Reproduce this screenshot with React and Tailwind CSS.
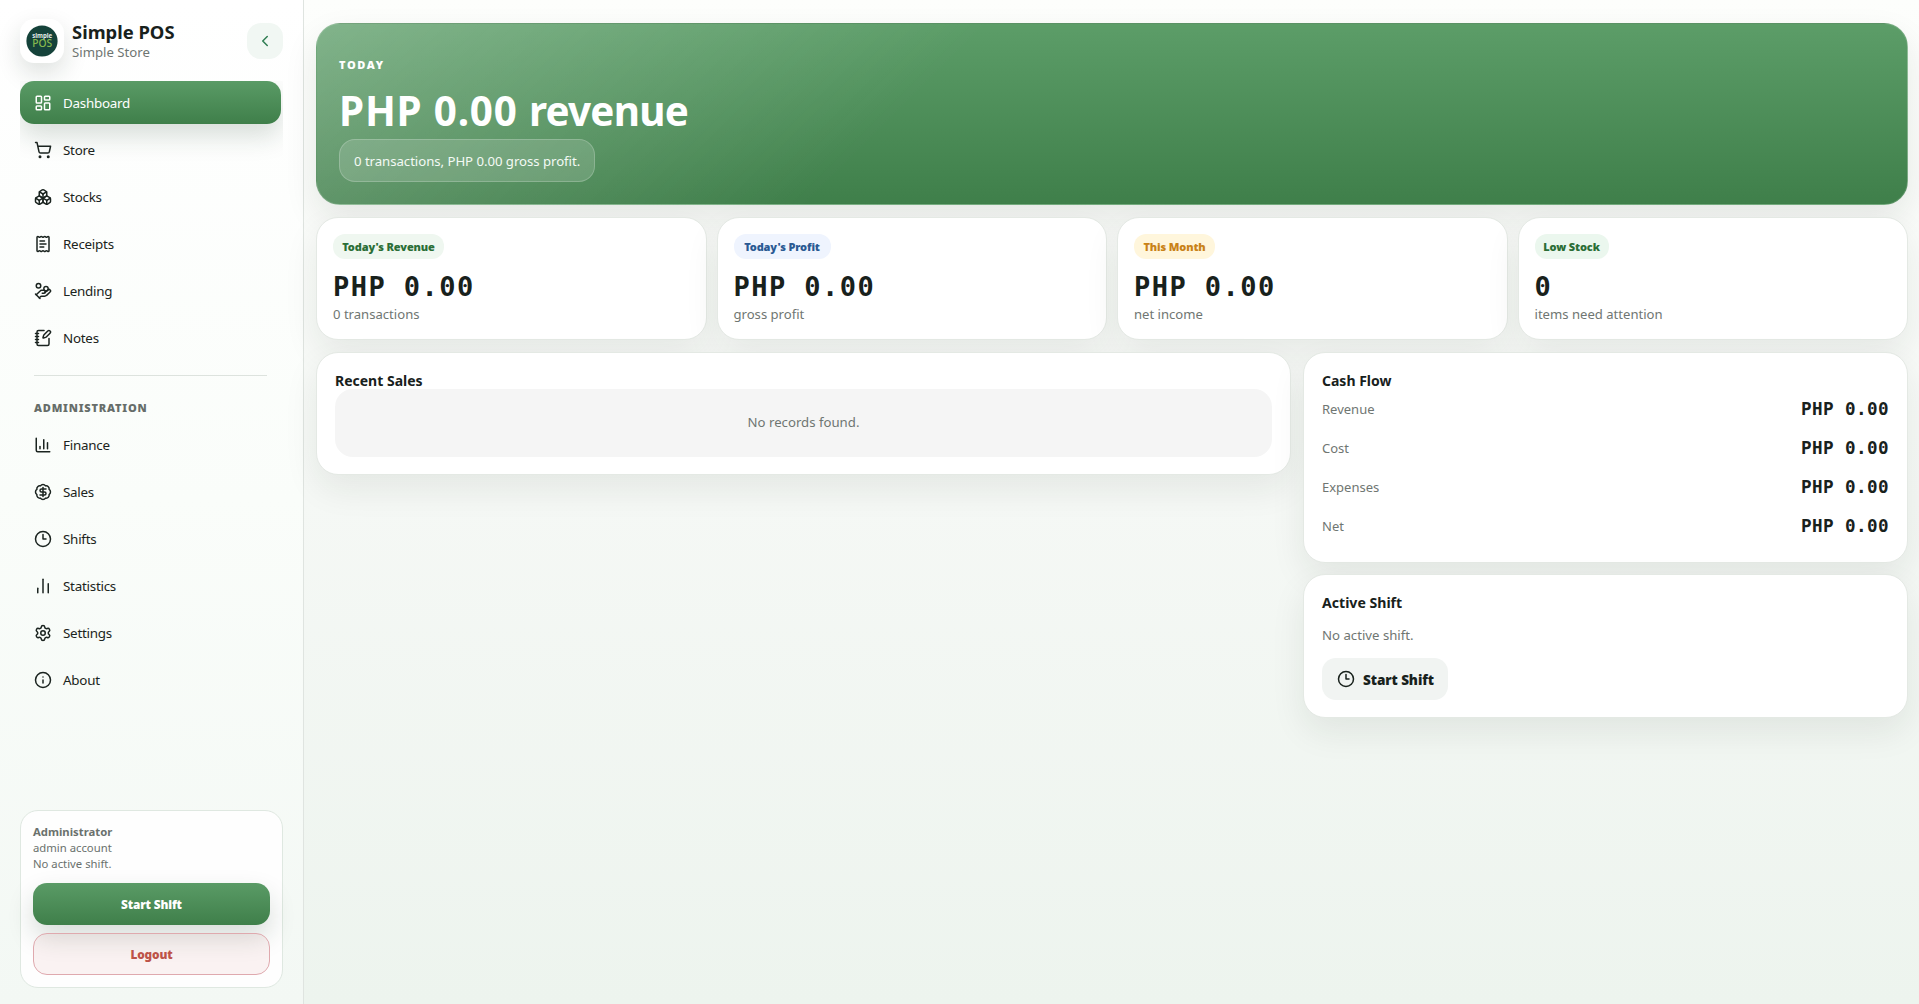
import React from "react";
import {
  LayoutDashboard,
  ShoppingCart,
  Boxes,
  ReceiptText,
  HandCoins,
  NotebookPen,
  ChartColumn,
  BadgeDollarSign,
  Clock3,
  ChartNoAxesColumn,
  Settings,
  Info,
  ChevronLeft,
} from "lucide-react";

const mainNav = [
  { label: "Dashboard", icon: LayoutDashboard, active: true },
  { label: "Store", icon: ShoppingCart },
  { label: "Stocks", icon: Boxes },
  { label: "Receipts", icon: ReceiptText },
  { label: "Lending", icon: HandCoins },
  { label: "Notes", icon: NotebookPen },
];

const adminNav = [
  { label: "Finance", icon: ChartColumn },
  { label: "Sales", icon: BadgeDollarSign },
  { label: "Shifts", icon: Clock3 },
  { label: "Statistics", icon: ChartNoAxesColumn },
  { label: "Settings", icon: Settings },
  { label: "About", icon: Info },
];

const stats = [
  { label: "Today's Revenue", value: "PHP 0.00", note: "0 transactions", tone: "bg-[#eff7f0] text-[#2b6e37]", width: "w-[111px]" },
  { label: "Today's Profit", value: "PHP 0.00", note: "gross profit", tone: "bg-[#eff4fe] text-[#2a5a93]", width: "w-[97px]" },
  { label: "This Month", value: "PHP 0.00", note: "net income", tone: "bg-[#fff6dc] text-[#c98218]", width: "w-[81px]" },
  { label: "Low Stock", value: "0", note: "items need attention", tone: "bg-[#ebf7ee] text-[#2b6e37]", width: "w-[74px]" },
];

const cashFlow = ["Revenue", "Cost", "Expenses", "Net"];

const cardClass =
  "border border-[#e4e9e4] bg-white shadow-[0_14px_34px_rgba(26,32,26,0.08)]";

function Logo() {
  return (
    <div className="flex size-11 shrink-0 items-center justify-center rounded-[14px] bg-white shadow-[0_10px_24px_rgba(24,39,29,0.14)]">
      <svg viewBox="0 0 32 32" className="size-8">
        <circle cx="16" cy="16" r="15.6" fill="#15423a" />
        <text x="16.2" y="13.4" textAnchor="middle" textLength="20" lengthAdjust="spacingAndGlyphs" fontFamily="Noto Sans, sans-serif" fontWeight="700" fontSize="6.8" fill="#e4ece8">simple</text>
        <text x="16.2" y="22.4" textAnchor="middle" textLength="20" lengthAdjust="spacingAndGlyphs" fontFamily="Noto Sans, sans-serif" fontWeight="500" fontSize="9.8" fill="#86b84e">POS</text>
      </svg>
    </div>
  );
}

function NavItem({ label, icon: Icon, active }) {
  return (
    <a
      className={
        active
          ? "flex h-[43px] items-center gap-[11px] rounded-[14px] bg-linear-to-b from-[#5a9b66] to-[#3f7f4a] px-3.5 text-white shadow-[0_12px_26px_rgba(24,60,34,0.17)]"
          : "flex h-[43px] items-center gap-[11px] rounded-[14px] px-3.5 text-[#1b2420]"
      }
    >
      <Icon className="size-[18px]" strokeWidth={2} />
      <span className="pt-0.5 text-[13.4px] tracking-[-0.25px]">{label}</span>
    </a>
  );
}

function Sidebar() {
  return (
    <aside className="flex h-full w-[304px] shrink-0 flex-col border-r border-[#dfe4e0] bg-linear-to-b from-white via-[#fafdfa] to-[#f3f8f4] px-5 pb-4 pt-[19px]">
      <header className="flex h-11 items-center">
        <Logo />
        <div className="ml-2 flex-1">
          <div className="text-[18.4px] font-bold leading-[22px] text-[#18211c]">Simple POS</div>
          <div className="text-[13.2px] leading-[18px] text-[#6f7672]">Simple Store</div>
        </div>
        <button className="flex size-9 items-center justify-center rounded-[14px] bg-[#f1f7f3] text-[#2f7d52]">
          <ChevronLeft className="size-[18px]" strokeWidth={2} />
        </button>
      </header>

      <nav className="mt-[18px] flex flex-1 flex-col gap-1 overflow-hidden pr-0.5">
        {mainNav.map((item) => (
          <NavItem key={item.label} {...item} />
        ))}
        <hr className="mx-3.5 mt-3 border-[#dde3de]" />
        <div className="mb-[3px] mt-5 px-3.5 text-[11px] font-black leading-4 tracking-[0.8px] text-[#666d69]">
          ADMINISTRATION
        </div>
        {adminNav.map((item) => (
          <NavItem key={item.label} {...item} />
        ))}
      </nav>

      <section className="flex flex-col rounded-[18px] border border-[#dfe8e1] bg-[#fefefe] p-3">
        <div className="pt-px text-[11.3px] leading-4 text-[#6a716d]">
          <div className="font-bold">Administrator</div>
          <div>admin account</div>
          <div>No active shift.</div>
        </div>
        <button className="mt-[11px] h-[42px] rounded-[14px] bg-linear-to-b from-[#5a9b66] to-[#3f7f4a] pt-0.5 text-[11.8px] font-black tracking-[-0.15px] text-white shadow-[0_12px_26px_rgba(24,60,34,0.17)]">
          Start Shift
        </button>
        <button className="mt-2 h-[42px] rounded-[14px] border border-[#dfa9ae] bg-[#c0392b]/6 pt-0.5 text-[11.8px] font-black tracking-[-0.1px] text-[#bd5348]">
          Logout
        </button>
      </section>
    </aside>
  );
}

function Hero() {
  return (
    <section className="flex h-[182px] flex-col items-start rounded-[24px] border border-white/15 bg-[linear-gradient(135deg,rgba(255,255,255,0.23),rgba(255,255,255,0)_38%),linear-gradient(180deg,#5c9d68,#3f7f4a)] pl-[22px] pt-[33px] text-white shadow-[0_14px_34px_rgba(26,32,26,0.09)]">
      <div className="text-[11px] font-black leading-4 tracking-[1.6px]">TODAY</div>
      <h1 className="mt-[14px] text-[40.4px] font-bold leading-[48px]">
        <span className="tracking-[0.8px]">PHP 0.00 </span>
        <span className="tracking-[-0.75px]">revenue</span>
      </h1>
      <p className="mt-1 flex h-[43px] items-center rounded-[16px] border border-white/20 bg-white/15 px-3.5 pt-0.5 text-[13.2px] tracking-[-0.04px] text-[#f4faf5]">
        0 transactions, PHP 0.00 gross profit.
      </p>
    </section>
  );
}

function StatCard({ label, value, note, tone, width }) {
  return (
    <article className={`h-[123px] rounded-[22px] px-4 pt-4 ${cardClass}`}>
      <div className={`flex h-[25px] items-center justify-center whitespace-nowrap rounded-[12px] pt-0.5 text-[11px] font-black tracking-[-0.12px] ${width} ${tone}`}>
        {label}
      </div>
      <div className="mt-[10px] font-['DejaVu_Sans_Mono',monospace] text-[27px] font-bold leading-9 tracking-[1.45px] text-[#18211c]">
        {value}
      </div>
      <div className="-mt-px text-[13.1px] leading-5 text-[#6f7672]">{note}</div>
    </article>
  );
}

function RecentSales() {
  return (
    <section className={`self-start rounded-[22px] px-[18px] pb-[17px] pt-[19px] ${cardClass}`}>
      <h2 className="h-[17px] text-[14px] font-bold leading-[18px] text-[#18211c]">Recent Sales</h2>
      <div className="flex h-[68px] items-center justify-center rounded-[18px] bg-[#f5f5f5] text-[13.2px] text-[#6f7672]">
        No records found.
      </div>
    </section>
  );
}

function CashFlow() {
  return (
    <section className={`h-[211px] rounded-[22px] px-[18px] pt-[18px] ${cardClass}`}>
      <h2 className="text-[14px] font-bold leading-[19px] text-[#18211c]">Cash Flow</h2>
      <dl>
        {cashFlow.map((label) => (
          <div key={label} className="flex h-[39px] items-center justify-between">
            <dt className="text-[13px] text-[#6f7672]">{label}</dt>
            <dd className="font-['DejaVu_Sans_Mono',monospace] text-[17.6px] font-bold tracking-[0.4px] text-[#18211c]">
              PHP 0.00
            </dd>
          </div>
        ))}
      </dl>
    </section>
  );
}

function ActiveShift() {
  return (
    <section className={`h-[144px] rounded-[22px] px-[18px] pt-[19px] ${cardClass}`}>
      <h2 className="text-[14.1px] font-bold leading-[18px] text-[#18211c]">Active Shift</h2>
      <p className="mt-[13px] text-[13.2px] leading-5 text-[#6f7672]">No active shift.</p>
      <button className="mt-[13px] flex h-[42px] w-[126px] items-center gap-2 rounded-[14px] bg-[#f1f4f2] pl-[15px] text-[13.6px] font-black tracking-[-0.1px] text-[#18211c]">
        <Clock3 className="size-[18px]" strokeWidth={2} />
        <span className="pt-0.5">Start Shift</span>
      </button>
    </section>
  );
}

export default function App() {
  return (
    <div className="flex h-screen overflow-hidden bg-linear-to-b from-[#fdfefc] via-[#f5f8f5] to-[#edf4ee] font-['Noto_Sans','Open_Sans',sans-serif]">
      <Sidebar />
      <main className="flex flex-1 flex-col gap-[13px] pl-3 pr-[11px] pt-[23px]">
        <Hero />
        <div className="-my-px grid grid-cols-4 gap-2.5">
          {stats.map((stat) => (
            <StatCard key={stat.label} {...stat} />
          ))}
        </div>
        <div className="grid grid-cols-[975fr_605fr] gap-3">
          <RecentSales />
          <div className="flex flex-col gap-[11px]">
            <CashFlow />
            <ActiveShift />
          </div>
        </div>
      </main>
    </div>
  );
}
